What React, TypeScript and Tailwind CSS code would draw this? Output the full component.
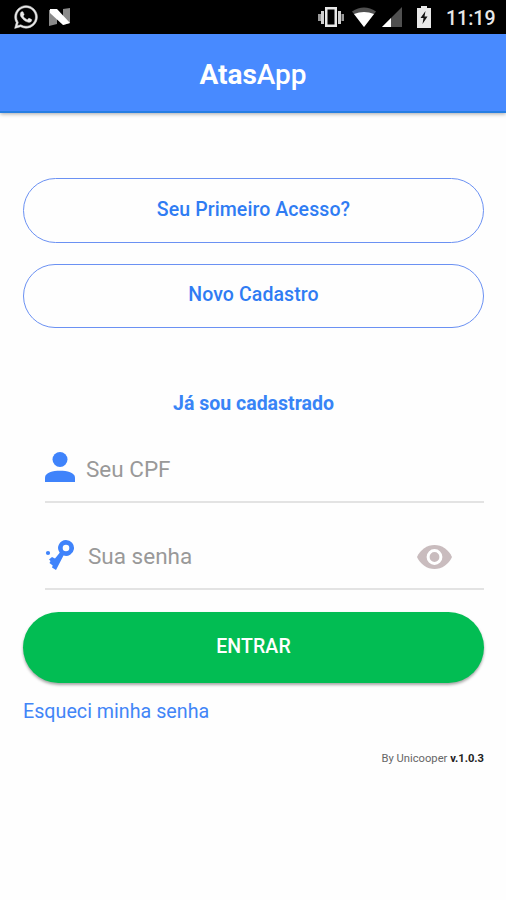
import { useState } from "react";
import type { ReactNode } from "react";
import { FaWhatsapp } from "react-icons/fa";

function StatusBar() {
  return (
    <div className="flex h-[34px] items-center bg-black pl-[13px] pr-[11px] text-[#e8e8e8]">
      <FaWhatsapp className="size-[26px] stroke-current stroke-[10]" />
      <svg className="ml-[10px] h-[18px] w-[22px]" viewBox="0 0 22 18">
        <path d="M0 2h8v14l-8 2zM14 1l7-1v15l-7 2z" fill="#8a8a8a" />
        <path d="M1 1h7l13 14-7 2L1 5z" fill="#fff" />
      </svg>
      <svg className="ml-auto h-[20px] w-[28px]" viewBox="0 0 28 20">
        <path
          d="M8 0h12v20H8zM10.500 2.500v15h7v-15z"
          fill="currentColor"
          fillRule="evenodd"
        />
        <path d="M4 4h3v13H4zM21 4h3v13h-3z" fill="#d0d0d0" />
        <path d="M1 7h3v7H1zM24.500 7h2.500v7h-2.500z" fill="#999" />
      </svg>
      <svg className="ml-[7px] h-[20px] w-[24px]" viewBox="0 0 24 20">
        <path d="M0 4.500Q12-3.500 24 4.500L12 20z" fill="#505050" />
        <path d="M2 7Q12 3 22 7L12 20z" fill="#fff" />
      </svg>
      <svg className="ml-[6px] h-[20px] w-[20px]" viewBox="0 0 20 20">
        <path d="M20 0v20H0z" fill="#505050" />
        <path d="M9 11v9H0z" fill="#fff" />
      </svg>
      <svg className="ml-[15px] h-[22px] w-[14px]" viewBox="0 0 14 22">
        <path d="M4 0h6v2h4v20H0V2h4z" fill="currentColor" />
        <path d="M8.500 5L3.500 12h3L5.500 18l5-7.500h-3z" fill="#111" />
      </svg>
      <span className="ml-[15px] w-[49px] pt-[3px] text-right text-[19.500px] leading-none font-medium">
        11:19
      </span>
    </div>
  );
}

function OutlineButton({ children }: { children: ReactNode }) {
  return (
    <button className="h-[64.500px] w-full rounded-full border-[1.500px] border-[#6b91f3] pb-[1.500px] text-[19.500px] font-medium tracking-[0.1px] text-[#2f7cf3]">
      {children}
    </button>
  );
}

function KeyIcon() {
  return (
    <svg className="h-[30px] w-[30px] shrink-0" viewBox="0 0 30 30" fill="#3f83fb">
      <path
        d="M21 0a8 8 0 1 1-2.500 15.600L11 30l-4-2.500.7-2-3.200-2.500 1-2-1.500-1.500 3-2.500 3 1.500L14.700 12.800A8 8 0 0 1 21 0zm0 4.700a3.300 3.300 0 1 0 0 6.600 3.300 3.300 0 0 0 0-6.600z"
        fillRule="evenodd"
      />
      <circle cx="3" cy="13" r="2.100" />
    </svg>
  );
}

export default function App() {
  const [visible, setVisible] = useState(false);

  return (
    <div className="min-h-[900px] w-[506px] bg-[#fefefe] font-[Roboto,sans-serif]">
      <StatusBar />
      <header className="flex h-[79px] items-center justify-center border-b-2 border-[#277ee2] bg-[#488aff] pt-1 shadow-[0_1px_4px_rgba(0,0,0,0.35)]">
        <h1 className="text-[28px] font-medium text-white">
          <b className="font-bold">Atas</b>App
        </h1>
      </header>

      <main className="pt-[65px] pr-[22px] pl-[23px]">
        <div className="flex flex-col gap-[21px]">
          <OutlineButton>Seu Primeiro Acesso?</OutlineButton>
          <OutlineButton>Novo Cadastro</OutlineButton>
        </div>

        <h2 className="mt-[62px] text-center text-[19.500px] leading-7 font-bold text-[#3884f6]">
          Já sou cadastrado
        </h2>

        <form className="mt-[19px]">
          <label className="ml-[22px] flex h-[66px] border-b-2 border-[#e3e3e3]">
            <svg className="mt-[15px] h-[30px] w-[30px] shrink-0" viewBox="0 0 30 30" fill="#3f83fb">
              <circle cx="15" cy="7.500" r="7.500" />
              <path d="M0 30v-4.500C0 20.500 8 18.700 15 18.700s15 1.800 15 6.800V30z" />
            </svg>
            <input
              placeholder="Seu CPF"
              className="ml-[11px] h-[64px] min-w-0 flex-1 text-[22.500px] text-gray-700 outline-none placeholder:text-[#999]"
            />
          </label>
          <div className="ml-[22px] flex h-[87px] items-start border-b-2 border-[#e3e3e3] pt-[37px]">
            <KeyIcon />
            <input
              type={visible ? "text" : "password"}
              placeholder="Sua senha"
              className="ml-[13px] h-[33px] min-w-0 flex-1 text-[22.500px] text-gray-700 outline-none placeholder:text-[#999]"
            />
            <button type="button" aria-label="Mostrar senha" className="mt-[5px] mr-[32px]" onClick={() => setVisible(!visible)}>
              <svg className="h-[24px] w-[35px]" viewBox="0 0 35 24">
                <path d="M0 12C3.500 4.500 10 0 17.500 0S31.500 4.500 35 12C31.500 19.500 25 24 17.500 24S3.500 19.500 0 12z" fill="#c9bcbe" />
                <circle cx="17.500" cy="12" r="6.400" fill="#c9bcbe" stroke="#fff" strokeWidth="3" />
              </svg>
            </button>
          </div>
          <button type="button" className="mt-[22px] h-[71px] w-full rounded-full bg-[#02bd53] pb-[1px] text-[19.500px] font-medium tracking-[0.1px] text-white shadow-[0_2px_3px_rgba(0,0,0,0.35)]">
            ENTRAR
          </button>
        </form>

        <a href="#" className="mt-[13px] block text-[19.700px] leading-8 text-[#4285f7]">
          Esqueci minha senha
        </a>
        <p className="mt-[23px] text-right text-[11.200px] leading-4 text-[#666]">
          By Unicooper <b className="font-bold text-[#222]">v.1.0.3</b>
        </p>
      </main>
    </div>
  );
}
